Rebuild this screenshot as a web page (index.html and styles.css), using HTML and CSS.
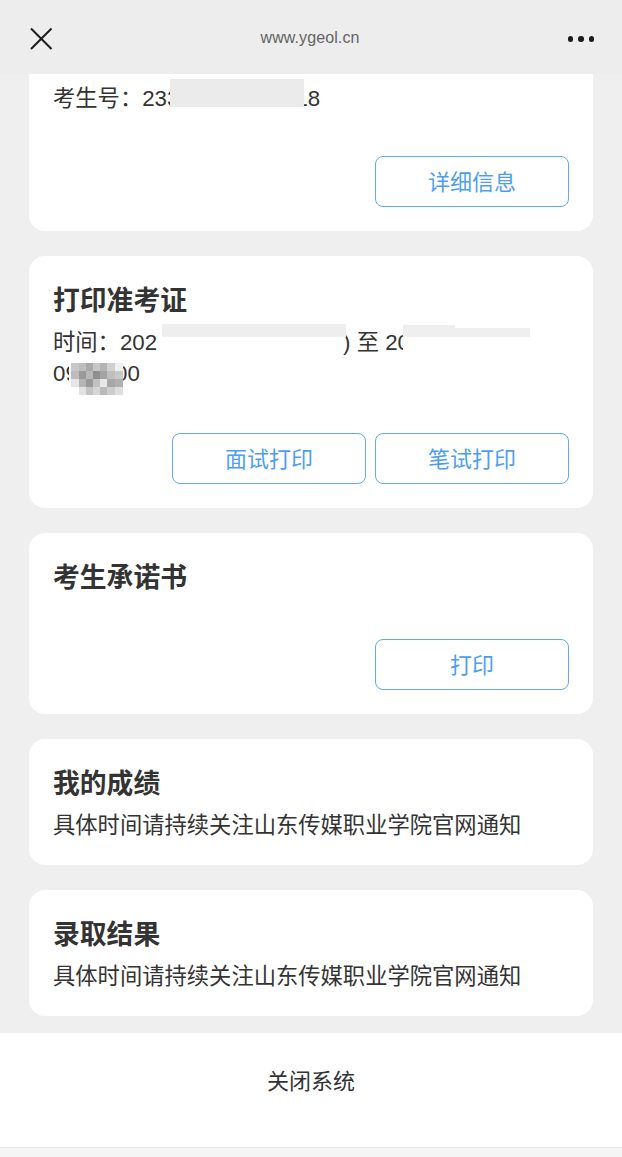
FILE: index.html
```html
<!DOCTYPE html>
<html lang="zh-CN">
<head>
<meta charset="utf-8">
<title>www.ygeol.cn</title>
<link rel="stylesheet" href="styles.css">
</head>
<body>
<header class="topbar">
  <svg class="close-icon" width="24" height="24" viewBox="0 0 24 24"><path d="M2 1.5 L22.5 22 M22.5 1.5 L2 22" stroke="#1c1c1c" stroke-width="2" fill="none"/></svg>
  <div class="url">www.ygeol.cn</div>
  <div class="more"><span></span><span></span><span></span></div>
</header>

<main class="content">
  <section class="card card-first">
    <p class="text line-rel">考生号：233<span class="gap-id"></span>18<span class="mask-id"></span></p>
    <div class="actions">
      <button class="btn">详细信息</button>
    </div>
  </section>

  <section class="card">
    <h2 class="title">打印准考证</h2>
    <p class="text line-rel">时间：202<span class="blank b1"></span>) 至 20<span class="bar bar1"></span><span class="bar bar2"></span><span class="bar bar3"></span><span class="cover"></span><br>09:00:00
      <svg class="mosaic" width="54" height="32" viewBox="0 0 54 32">
        <rect x="0" y="0" width="2" height="8" fill="#ffffff"/><rect x="2" y="0" width="8" height="8" fill="#c8c8c8"/><rect x="10" y="0" width="7" height="8" fill="#bdbdbd"/><rect x="17" y="0" width="7" height="8" fill="#a9a9a9"/><rect x="24" y="0" width="7" height="8" fill="#c6c6c6"/><rect x="31" y="0" width="7" height="8" fill="#b3b3b3"/><rect x="38" y="0" width="8" height="8" fill="#d0d0d0"/><rect x="46" y="0" width="8" height="8" fill="#f0f0f0"/>
        <rect x="0" y="8" width="2" height="8" fill="#f4f4f4"/><rect x="2" y="8" width="8" height="8" fill="#bcbcbc"/><rect x="10" y="8" width="7" height="8" fill="#9a9a9a"/><rect x="17" y="8" width="7" height="8" fill="#b8b8b8"/><rect x="24" y="8" width="7" height="8" fill="#8f8f8f"/><rect x="31" y="8" width="7" height="8" fill="#a3a3a3"/><rect x="38" y="8" width="8" height="8" fill="#bfbfbf"/><rect x="46" y="8" width="8" height="8" fill="#c9c9c9"/>
        <rect x="0" y="16" width="2" height="8" fill="#ffffff"/><rect x="2" y="16" width="8" height="8" fill="#e6e6e6"/><rect x="10" y="16" width="7" height="8" fill="#b5b5b5"/><rect x="17" y="16" width="7" height="8" fill="#999"/><rect x="24" y="16" width="7" height="8" fill="#c2c2c2"/><rect x="31" y="16" width="7" height="8" fill="#e8e8e8"/><rect x="38" y="16" width="8" height="8" fill="#a6a6a6"/><rect x="46" y="16" width="8" height="8" fill="#b0b0b0"/>
        <rect x="2" y="24" width="8" height="8" fill="#fff"/><rect x="10" y="24" width="7" height="8" fill="#e2e2e2"/><rect x="17" y="24" width="7" height="8" fill="#c4c4c4"/><rect x="24" y="24" width="7" height="8" fill="#d6d6d6"/><rect x="31" y="24" width="7" height="8" fill="#bababa"/><rect x="38" y="24" width="8" height="8" fill="#cdcdcd"/><rect x="46" y="24" width="8" height="8" fill="#dedede"/>
      </svg>
    </p>
    <div class="actions actions-2">
      <button class="btn">面试打印</button>
      <button class="btn">笔试打印</button>
    </div>
  </section>

  <section class="card">
    <h2 class="title">考生承诺书</h2>
    <div class="actions actions-3">
      <button class="btn">打印</button>
    </div>
  </section>

  <section class="card">
    <h2 class="title">我的成绩</h2>
    <p class="text desc">具体时间请持续关注山东传媒职业学院官网通知</p>
  </section>

  <section class="card">
    <h2 class="title">录取结果</h2>
    <p class="text desc">具体时间请持续关注山东传媒职业学院官网通知</p>
  </section>
</main>

<footer class="bottombar">
  <div class="close-system">关闭系统</div>
</footer>
<div class="home-strip"></div>
</body>
</html>
```

FILE: styles.css
```css
* {
  box-sizing: border-box;
}

html, body {
  margin: 0;
  padding: 0;
}

body {
  width: 622px;
  height: 1157px;
  overflow: hidden;
  background: #efefef;
  font-family: "Liberation Sans", "Noto Sans CJK SC", sans-serif;
  color: #333333;
}

.topbar {
  height: 74px;
  background: #ededed;
  position: relative;
  display: flex;
  align-items: center;
  justify-content: space-between;
  padding: 4px 28px 0 29px;
}

.close-icon {
  display: block;
}

.url {
  font-size: 16px;
  color: #646464;
  letter-spacing: 0.1px;
  position: absolute;
  left: 0;
  right: 2px;
  top: 29px;
  text-align: center;
}

.more {
  display: flex;
  gap: 5px;
}

.more span {
  width: 5.5px;
  height: 5.5px;
  border-radius: 50%;
  background: #1c1c1c;
}

.content {
  padding: 0 29px 17px;
  display: flex;
  flex-direction: column;
  gap: 25px;
}

.card {
  background: #ffffff;
  border-radius: 16px;
  padding: 25px 24px 24px;
}

.card-first {
  border-radius: 0 0 16px 16px;
  padding-top: 9px;
}

.title {
  margin: 0;
  font-size: 26.8px;
  line-height: 40px;
  font-weight: bold;
  color: #333333;
}

.text {
  margin: 0;
  font-size: 22.3px;
  line-height: 31px;
  color: #333333;
}

.title + .text {
  margin-top: 6px;
}

.line-rel {
  position: relative;
}

.gap-id {
  display: inline-block;
  width: 116px;
  height: 1px;
}

.mask-id {
  position: absolute;
  left: 117px;
  top: -4px;
  width: 134px;
  height: 28px;
  background: #ebebeb;
}

.blank {
  display: inline-block;
  height: 1px;
}

.b1 {
  width: 186px;
}

.cover {
  position: absolute;
  left: 350px;
  top: 0;
  width: 130px;
  height: 31px;
  background: #ffffff;
}

.bar {
  position: absolute;
  background: #eeeeee;
  z-index: 1;
}

.bar1 {
  left: 109px;
  top: -3px;
  width: 184px;
  height: 13px;
}

.bar2 {
  left: 350px;
  top: -2px;
  width: 52px;
  height: 12px;
}

.bar3 {
  left: 350px;
  top: 1px;
  width: 127px;
  height: 9px;
  background: #efefef;
}

.mosaic {
  position: absolute;
  left: 16px;
  top: 36px;
}

.actions {
  display: flex;
  justify-content: flex-end;
  gap: 9px;
  margin-top: 42px;
}

.actions-2 {
  margin-top: 44px;
}

.actions-3 {
  margin-top: 41px;
}

.btn {
  width: 194px;
  height: 51px;
  background: #ffffff;
  border: 1.5px solid #62a9f4;
  border-radius: 8px;
  font-family: "Liberation Sans", "Noto Sans CJK SC", sans-serif;
  font-size: 22px;
  color: #4d9ef2;
  padding: 0 0 3px;
}

.bottombar {
  height: 114px;
  background: #ffffff;
  display: flex;
  align-items: flex-start;
  justify-content: center;
  padding-top: 35px;
}

.close-system {
  font-size: 22px;
  line-height: 28px;
  color: #333333;
}

.home-strip {
  height: 10px;
  background: #f5f5f5;
  border-top: 1px solid #e6e6e6;
}
```
